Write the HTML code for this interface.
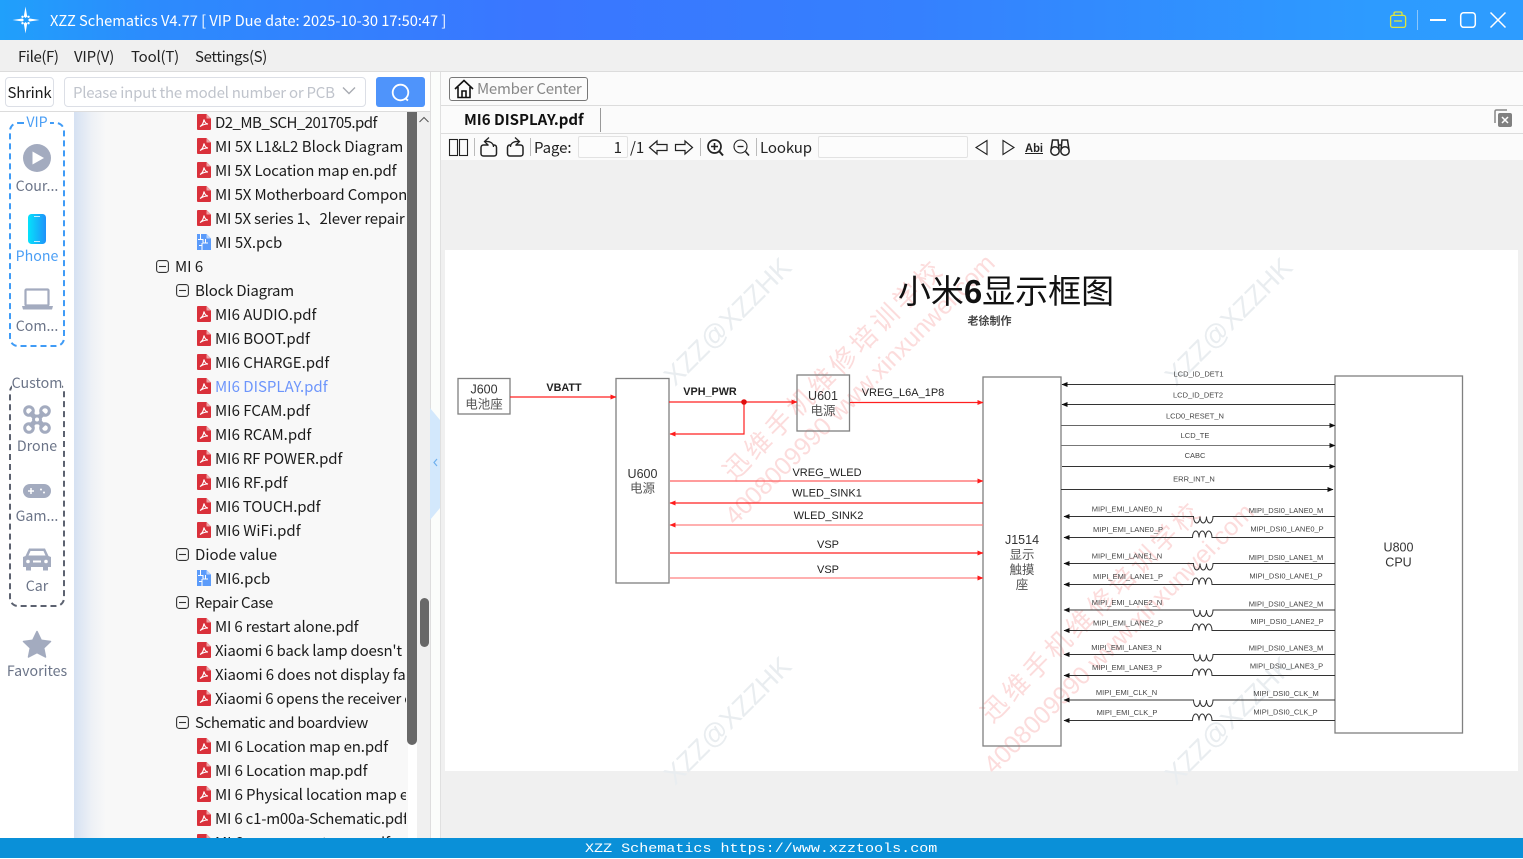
<!DOCTYPE html>
<html><head><meta charset="utf-8"><title>XZZ Schematics</title>
<style>
*{box-sizing:border-box}
html,body{margin:0;padding:0;width:1523px;height:858px;overflow:hidden;background:#fff;font-family:"Noto Sans CJK SC","Liberation Sans",sans-serif;font-size:15px;color:#222}
.a{position:absolute}
.t{position:absolute;white-space:nowrap;line-height:20px}
#tree{position:absolute;left:74px;top:112px;width:334px;height:726px;overflow:hidden;background:linear-gradient(90deg,#d5e1f2 0,#eef1f6 18px,#f8f8f8 32px)}
#tree div{height:24px;line-height:26px;white-space:nowrap;position:relative;margin:0;width:332px;overflow:hidden;color:#1c1c1c}
#tree .w{position:absolute;left:0;top:-2px;width:333px}
.f{padding-left:141px}.f svg{position:absolute;left:123px;top:4px;width:14px;height:16px}
.g{padding-left:121px}.g svg{position:absolute;left:102px;top:6px;width:13px;height:13px}
.h{padding-left:101px}.h svg{position:absolute;left:82px;top:6px;width:13px;height:13px}
.n1{letter-spacing:-.12px}.n2{letter-spacing:-.2px}.n3{letter-spacing:-.35px}.n5{letter-spacing:-.55px}
.s{position:absolute;left:0;width:74px;text-align:center;color:#6b7488;font-size:14.200px;line-height:20px;white-space:nowrap}
svg{display:block}
</style></head><body>
<svg width="0" height="0" style="position:absolute"><defs>
<symbol id="pdf" viewBox="0 0 14 16"><path d="M1 0H9.500L14 4.500V15a1 1 0 0 1-1 1H1a1 1 0 0 1-1-1V1a1 1 0 0 1 1-1z" fill="#d9303a"/><path d="M9.500 0V4.500H14z" fill="#f0a0a4"/><path d="M3 12.500C5 11.500 6.500 9 7 5.500C7.500 8 9 9.800 11 10C9 10 6 10.500 3 12.500z" fill="none" stroke="#fff" stroke-width="1.100"/></symbol>
<symbol id="pcb" viewBox="0 0 14 16"><path d="M0 0H9.500L14 4.500V16H0z" fill="#5b9bfa"/><path d="M9.500 0L14 4.500H9.500z" fill="#b9d4fd"/><path d="M3.500 0V5.500H1M3.500 5.500H6V9H11M8.500 9V5M5 16V11.500H2M5 11.500V9" fill="none" stroke="#fff" stroke-width="1"/></symbol>
<symbol id="min" viewBox="0 0 13 13"><rect x=".6" y=".6" width="11.800" height="11.800" rx="2.500" fill="none" stroke="#333" stroke-width="1.100"/><path d="M3 6.500H10" stroke="#333" stroke-width="1.100"/></symbol>
<marker id="ar" markerWidth="6" markerHeight="6" refX="5.500" refY="2.500" orient="auto" markerUnits="userSpaceOnUse"><path d="M0 0L6 2.500L0 5z" fill="#ff1c1c"/></marker>
<marker id="ab" markerWidth="6" markerHeight="6" refX="5.500" refY="2.500" orient="auto" markerUnits="userSpaceOnUse"><path d="M0 0L6 2.500L0 5z" fill="#111"/></marker>
</defs></svg>

<!-- Title bar -->
<div class="a" style="left:0;top:0;width:1523px;height:40px;background:linear-gradient(90deg,#20a0fb 0,#2c8bfd 10%,#3a76ff 35%,#3580fe 60%,#2d9bff 90%,#2d9cff 100%)"></div>
<svg class="a" style="left:11px;top:5px" width="30" height="30" viewBox="0 0 30 30"><path d="M14.500 1.500L16.200 11.500L14.500 13L12.800 11.500zM14.500 28.500L16.200 18.500L14.500 17L12.800 18.500zM1.500 15L11.500 13.500L13 15L11.500 16.500zM28.500 15L18.500 13.500L17 15L18.500 16.500z" fill="#fff"/><circle cx="11.500" cy="11.800" r="1.200" fill="#fff"/><circle cx="17.500" cy="11.800" r="1.200" fill="#fff"/><circle cx="11.500" cy="18.200" r="1.200" fill="#fff"/><circle cx="17.500" cy="18.200" r="1.200" fill="#fff"/></svg>
<div class="t" style="left:50px;top:11px;color:#fff;font-size:14.650px">XZZ Schematics V4.77 [ VIP Due date: 2025-10-30 17:50:47 ]</div>
<svg class="a" style="left:1385px;top:8px" width="125" height="26" viewBox="0 0 125 26"><path d="M9 7V5.500C9 4.500 9.500 4 10.500 4H15.500C16.500 4 17 4.500 17 5.500V7" fill="none" stroke="#dde63c" stroke-width="1.300"/><rect x="5.600" y="7.400" width="15" height="12" rx="2" fill="none" stroke="#dde63c" stroke-width="1.300"/><path d="M9 13H17" stroke="#dde63c" stroke-width="1.300"/><path d="M32.500 2V22" stroke="#8cc6fb" stroke-width="1"/><path d="M45 12H61" stroke="#fff" stroke-width="2"/><rect x="75.700" y="4.700" width="14.600" height="14.600" rx="3" fill="none" stroke="#fff" stroke-width="1.500"/><path d="M105.500 4.500L120.500 19.500M120.500 4.500L105.500 19.500" stroke="#fff" stroke-width="1.500"/></svg>

<!-- Menu -->
<div class="a" style="left:0;top:40px;width:1523px;height:32px;background:#f0f0f0;border-bottom:1px solid #dcdcdc"></div>
<div class="t" style="left:18px;top:47px;letter-spacing:-.4px">File(F)</div>
<div class="t" style="left:74px;top:47px;letter-spacing:-.2px">VIP(V)</div>
<div class="t" style="left:131px;top:47px;letter-spacing:-.2px">Tool(T)</div>
<div class="t" style="left:195px;top:47px;letter-spacing:-.36px">Settings(S)</div>

<!-- Search row -->
<div class="a" style="left:0;top:72px;width:430px;height:40px;background:#fff;border-bottom:1px solid #dcdcdc"></div>
<div class="a" style="left:5px;top:77px;width:49px;height:30px;border:1px solid #dcdfe6;border-radius:4px;text-align:center;line-height:30px;color:#1c1c1c;letter-spacing:-.25px">Shrink</div>
<div class="a" style="left:64px;top:77px;width:302px;height:30px;border:1px solid #dcdfe6;border-radius:4px;padding-left:8px;line-height:30px;color:#c0c4cc;white-space:nowrap;letter-spacing:-.24px">Please input the model number or PCB</div>
<svg class="a" style="left:342px;top:86px" width="14" height="10"><path d="M1 1.500L7 7.500L13 1.500" fill="none" stroke="#a8abb2" stroke-width="1.400"/></svg>
<div class="a" style="left:376px;top:77px;width:49px;height:30px;background:#4f94fb;border-radius:3px"></div>
<svg class="a" style="left:390px;top:82px" width="22" height="22"><circle cx="10.500" cy="10.500" r="7.800" fill="none" stroke="#fff" stroke-width="1.800"/><path d="M15.500 16.500L18 18.500" stroke="#fff" stroke-width="1.800"/></svg>

<!-- Left sidebar -->
<div class="a" style="left:0;top:112px;width:74px;height:726px;background:#fff"></div>
<div class="a" style="left:9px;top:122px;width:56px;height:225px;border:2px dashed #3f9bf6;border-radius:9px"></div>
<div class="s" style="top:112px;color:#4a9ef5"><span style="background:#fff;padding:0 2px">VIP</span></div>
<svg class="a" style="left:23px;top:144px" width="28" height="28"><circle cx="14" cy="14" r="14" fill="#a3abbf"/><path d="M9.500 7.500L21 14L9.500 20.500z" fill="#fff"/></svg>
<div class="s" style="top:175.500px">Cour...</div>
<svg class="a" style="left:28px;top:214px" width="18" height="31"><defs><linearGradient id="ph" x1="0" x2="1" y1="0" y2="0"><stop offset="0" stop-color="#05e2fb"/><stop offset="1" stop-color="#1f92fa"/></linearGradient></defs><rect width="18" height="30" rx="3.500" fill="url(#ph)"/><path d="M6 2.500H12M6 27.500H12" stroke="#fff" stroke-width=".8"/></svg>
<div class="s" style="top:245.500px;color:#4a9ef5">Phone</div>
<svg class="a" style="left:22px;top:288px" width="31" height="22"><rect x="3.500" y="1.500" width="23" height="16" rx="1" fill="none" stroke="#a3abbf" stroke-width="2.200"/><path d="M0 18H31L30 21.500H1z" fill="#a3abbf"/></svg>
<div class="s" style="top:315.500px">Com...</div>

<div class="a" style="left:9px;top:383px;width:56px;height:224px;border:2px dashed #5c6270;border-radius:9px"></div>
<div class="s" style="top:373px"><span style="background:#fff">Custom</span></div>
<svg class="a" style="left:23px;top:405px" width="28" height="29" viewBox="0 0 28 29"><g fill="none" stroke="#a3abbf"><circle cx="6" cy="6" r="4.300" stroke-width="3"/><circle cx="22" cy="6" r="4.300" stroke-width="3"/><circle cx="6" cy="23" r="4.300" stroke-width="3"/><circle cx="22" cy="23" r="4.300" stroke-width="3"/><path d="M7 7.500L21 21.500M21 7.500L7 21.500" stroke-width="5"/></g><circle cx="14" cy="14.500" r="5" fill="#a3abbf"/><circle cx="14" cy="14.500" r="2" fill="#fff"/></svg>
<div class="s" style="top:435.500px">Drone</div>
<svg class="a" style="left:23px;top:484px" width="28" height="14"><rect width="28" height="14" rx="7" fill="#a3abbf"/><path d="M5 7H11M8 4V10" stroke="#fff" stroke-width="1.500"/><circle cx="18" cy="5.500" r="1" fill="#fff"/><circle cx="21" cy="8.500" r="1" fill="#fff"/></svg>
<div class="s" style="top:505.500px">Gam...</div>
<svg class="a" style="left:23px;top:547px" width="28" height="24" viewBox="0 0 28 24"><path d="M6 1.500H22L25.500 9L28 10V20H25V23.500H20V20H8V23.500H3V20H0V10L2.500 9z" fill="#a3abbf"/><path d="M7.500 4H20.500L22.500 8.500H5.500z" fill="#fff"/><circle cx="5" cy="14.500" r="1.800" fill="#fff"/><circle cx="23" cy="14.500" r="1.800" fill="#fff"/><path d="M10 14.500H18" stroke="#fff" stroke-width="2"/></svg>
<div class="s" style="top:575.500px">Car</div>
<svg class="a" style="left:22px;top:630px" width="30" height="29" viewBox="0 0 30 29"><path d="M15 1.500L19.200 10.200L28.500 11.500L21.700 18L23.500 27L15 22.600L6.500 27L8.300 18L1.500 11.500L10.800 10.200z" fill="#a3abbf" stroke="#a3abbf" stroke-width="1.500" stroke-linejoin="round"/></svg>
<div class="s" style="top:660.500px">Favorites</div>

<!-- Tree -->
<div id="tree"><div class="w" style="height:auto;overflow:visible">
<div class="f n5"><svg><use href="#pdf"/></svg>D2_MB_SCH_201705.pdf</div>
<div class="f"><svg><use href="#pdf"/></svg>MI 5X L1&amp;L2 Block Diagram</div>
<div class="f n1"><svg><use href="#pdf"/></svg>MI 5X Location map en.pdf</div>
<div class="f n1"><svg><use href="#pdf"/></svg>MI 5X Motherboard Components.pdf</div>
<div class="f n2"><svg><use href="#pdf"/></svg>MI 5X series 1、2lever repair</div>
<div class="f"><svg><use href="#pcb"/></svg>MI 5X.pcb</div>
<div class="h"><svg><use href="#min"/></svg>MI 6</div>
<div class="g n2"><svg><use href="#min"/></svg>Block Diagram</div>
<div class="f"><svg><use href="#pdf"/></svg>MI6 AUDIO.pdf</div>
<div class="f"><svg><use href="#pdf"/></svg>MI6 BOOT.pdf</div>
<div class="f"><svg><use href="#pdf"/></svg>MI6 CHARGE.pdf</div>
<div class="f" style="color:#6d95fb"><svg><use href="#pdf"/></svg>MI6 DISPLAY.pdf</div>
<div class="f"><svg><use href="#pdf"/></svg>MI6 FCAM.pdf</div>
<div class="f"><svg><use href="#pdf"/></svg>MI6 RCAM.pdf</div>
<div class="f n1"><svg><use href="#pdf"/></svg>MI6 RF POWER.pdf</div>
<div class="f"><svg><use href="#pdf"/></svg>MI6 RF.pdf</div>
<div class="f n1"><svg><use href="#pdf"/></svg>MI6 TOUCH.pdf</div>
<div class="f"><svg><use href="#pdf"/></svg>MI6 WiFi.pdf</div>
<div class="g"><svg><use href="#min"/></svg>Diode value</div>
<div class="f"><svg><use href="#pcb"/></svg>MI6.pcb</div>
<div class="g n3"><svg><use href="#min"/></svg>Repair Case</div>
<div class="f n2"><svg><use href="#pdf"/></svg>MI 6 restart alone.pdf</div>
<div class="f n2"><svg><use href="#pdf"/></svg>Xiaomi 6 back lamp doesn't</div>
<div class="f n1"><svg><use href="#pdf"/></svg>Xiaomi 6 does not display fault.pdf</div>
<div class="f n2"><svg><use href="#pdf"/></svg>Xiaomi 6 opens the receiver one.pdf</div>
<div class="g n3"><svg><use href="#min"/></svg>Schematic and boardview</div>
<div class="f n1"><svg><use href="#pdf"/></svg>MI 6 Location map en.pdf</div>
<div class="f n1"><svg><use href="#pdf"/></svg>MI 6 Location map.pdf</div>
<div class="f n1"><svg><use href="#pdf"/></svg>MI 6 Physical location map en.pdf</div>
<div class="f n2"><svg><use href="#pdf"/></svg>MI 6 c1-m00a-Schematic.pdf</div>
<div class="f"><svg><use href="#pdf"/></svg>MI 6 component map.pdf</div>
</div></div>

<!-- scrollbars -->
<div class="a" style="left:407px;top:112px;width:10px;height:633px;background:#686868;border-radius:0 0 5px 5px"></div>
<div class="a" style="left:417px;top:112px;width:13px;height:726px;background:#f0f0f0"></div>
<svg class="a" style="left:418px;top:115px" width="12" height="10"><path d="M1.500 7L6 2.500L10.500 7" fill="none" stroke="#555" stroke-width="1"/></svg>
<div class="a" style="left:420px;top:598px;width:9px;height:49px;background:#686868;border-radius:5px"></div>
<div class="a" style="left:430px;top:72px;width:1px;height:766px;background:#dedede"></div>
<div class="a" style="left:431px;top:72px;width:10px;height:766px;background:#fbfdfb"></div>
<div class="a" style="left:440px;top:72px;width:1px;height:766px;background:#e0e0e0"></div>
<svg class="a" style="left:430px;top:408px" width="11" height="113"><path d="M0 0L10 12V100L0 112z" fill="#d3e8fc"/><path d="M7 51L4 54.500L7 58" fill="none" stroke="#6fb0ee" stroke-width="1.200"/></svg>

<!-- Right panel -->
<div class="a" style="left:441px;top:72px;width:1082px;height:34px;background:#fbfbfb;border-bottom:1px solid #dcdcdc"></div>
<div class="a" style="left:449px;top:77px;width:139px;height:24px;border:1px solid #777;border-radius:3px"></div>
<svg class="a" style="left:454px;top:79px" width="20" height="20" viewBox="0 0 20 20"><path d="M1 10L10 1.500L19 10M4 8V18.500H16V8M8 18.500V12H12V18.500" fill="none" stroke="#111" stroke-width="1.600"/></svg>
<div class="t" style="left:477px;top:79px;color:#888;letter-spacing:-.25px">Member Center</div>
<div class="a" style="left:441px;top:106px;width:1082px;height:28px;background:#fbfbfb;border-bottom:1px solid #dcdcdc"></div>
<div class="t" style="left:464px;top:110px;font-weight:700;color:#111">MI6 DISPLAY.pdf</div>
<div class="a" style="left:600px;top:108px;width:1px;height:24px;background:#999"></div>
<svg class="a" style="left:1494px;top:109px" width="19" height="20"><path d="M1 14V2.500C1 1.500 1.500 1 2.500 1H13" fill="none" stroke="#888" stroke-width="1.500"/><rect x="4" y="4" width="14" height="14" rx="2" fill="#808080"/><path d="M8 8L14 14M14 8L8 14" stroke="#fff" stroke-width="1.500"/></svg>

<div class="a" style="left:441px;top:134px;width:1082px;height:26px;background:#fbfbfb"></div>
<svg class="a" style="left:441px;top:134px" width="640" height="26" viewBox="441 134 640 26">
<g fill="none" stroke="#222" stroke-width="1.100">
<rect x="449.500" y="139.500" width="8" height="16"/><rect x="459.500" y="139.500" width="8" height="16"/>
<path d="M488 145H483.500C482 145 481 146 481 147.500V153.500C481 155 482 156 483.500 156H494C495.500 156 496.500 155 496.500 153.500V147.500C496.500 146 495.500 145 494 145H493" stroke-width="1.500"/>
<path d="M493.500 147C493.500 143 490 141 485 141.500" stroke-width="1.300"/><path d="M489 137.500L484.500 141.500L488.500 145.500" stroke-width="1.300"/>
<path d="M516 145H520.500C522 145 523 146 523 147.500V153.500C523 155 522 156 520.500 156H510C508.500 156 507.500 155 507.500 153.500V147.500C507.500 146 508.500 145 510 145H511" stroke-width="1.500"/>
<path d="M510.500 147C510.500 143 514 141 519 141.500" stroke-width="1.300"/><path d="M515 137.500L519.500 141.500L515.500 145.500" stroke-width="1.300"/>
<path d="M649.500 147.500L657 141V144.500H667V150.500H657V154z" stroke-width="1.200"/>
<path d="M692.500 147.500L685 141V144.500H675.500V150.500H685V154z" stroke-width="1.200"/>
<circle cx="714.500" cy="146.500" r="6.500" stroke-width="1.700"/><path d="M719.500 151.500L723 155.500" stroke-width="2"/><path d="M711 146.500H718M714.500 143V150" stroke-width="1.600"/>
<circle cx="740.500" cy="146.500" r="6.500" stroke-width="1.100"/><path d="M745.500 151.500L749 155.500" stroke-width="1.600"/><path d="M737.500 146.500H743.500" stroke-width="1.300"/>
<path d="M987 140.500L976 147.500L987 154.500z"/><path d="M1003 140.500L1014 147.500L1003 154.500z"/>
<path d="M1025 153.500H1043" stroke-width="1"/>
<circle cx="1055" cy="151" r="4.200" stroke-width="1.500"/><circle cx="1065" cy="151" r="4.200" stroke-width="1.500"/><path d="M1051 150L1052.500 140H1058L1059 150M1061 150L1062 140H1067.500L1069 150M1059 145H1061" stroke-width="1.500"/>
</g>
<g stroke="#bbb"><path d="M474.500 138V156M530.500 138V156M700.500 138V156M756.500 138V156"/></g>
<text x="1034" y="152" font-family="Liberation Sans" font-size="11.500" font-weight="700" text-anchor="middle" fill="#222" textLength="18" lengthAdjust="spacingAndGlyphs">Abi</text>
</svg>
<div class="t" style="left:534px;top:138px;letter-spacing:-.1px">Page:</div>
<div class="a" style="left:578px;top:136px;width:50px;height:22px;border:1px solid #e2e2e2;background:#fcfcfc;text-align:right;padding-right:5px;line-height:21px;border-radius:2px">1</div>
<div class="t" style="left:630px;top:138px">/1</div>
<div class="t" style="left:760px;top:138px;letter-spacing:-.1px">Lookup</div>
<div class="a" style="left:818px;top:136px;width:150px;height:22px;border:1px solid #e2e2e2;background:#fcfcfc;border-radius:2px"></div>

<!-- Canvas -->
<div class="a" style="left:441px;top:160px;width:1082px;height:678px;background:#f0f0f0"></div>
<div class="a" style="left:445px;top:250px;width:1073px;height:521px;background:#fff"></div>
<svg class="a" style="left:441px;top:160px" width="1082" height="678" viewBox="441 160 1082 678" font-family="Liberation Sans" text-anchor="middle">
<!-- watermarks -->
<g font-size="27" fill="#e9edf0" text-anchor="middle">
<text transform="translate(734 328) rotate(-45)">XZZ@XZZHK</text>
<text transform="translate(734 727) rotate(-45)">XZZ@XZZHK</text>
<text transform="translate(1235 328) rotate(-45)">XZZ@XZZHK</text>
<text transform="translate(1235 727) rotate(-45)">XZZ@XZZHK</text>
</g>
<g fill="#fcdcdc" text-anchor="start">
<g font-family="Noto Sans CJK SC" font-size="26" letter-spacing="4">
<text transform="translate(734 482) rotate(-45)">迅维手机维修培训学校</text>
<text transform="translate(992 724) rotate(-45)">迅维手机维修培训学校</text>
</g>
<g font-size="25">
<text transform="translate(735 526) rotate(-45)">4008009990 www.xinxunwei.com</text>
<text transform="translate(994 775) rotate(-45)">4008009990 www.xinxunwei.com</text>
</g>
</g>
<!-- boxes -->
<g fill="none" stroke="#808080" stroke-width="1.300">
<rect x="458" y="378.500" width="52" height="35.500"/>
<rect x="616" y="378.500" width="53" height="204.500"/>
<rect x="797" y="375" width="52.500" height="56"/>
<rect x="983" y="377" width="78" height="369"/>
<rect x="1335" y="376" width="127.500" height="357"/>
</g>
<!-- red nets -->
<g fill="none" stroke="#ff2020" stroke-width="1.200">
<path d="M510 397H616" marker-end="url(#ar)"/>
<path d="M669 402H797" marker-end="url(#ar)"/>
<path d="M744 402V434H670" marker-end="url(#ar)"/>
<path d="M850 402.500H983" marker-end="url(#ar)"/>
<path d="M670 481H983" marker-end="url(#ar)" stroke="#ff6060"/>
<path d="M983 503H670" marker-end="url(#ar)"/>
<path d="M983 525H670" marker-end="url(#ar)" stroke="#ff8080"/>
<path d="M670 553H983" marker-end="url(#ar)"/>
<path d="M670 578H983" marker-end="url(#ar)" stroke="#ff8080"/>
</g>
<circle cx="744" cy="402" r="2.800" fill="#e01010"/>
<!-- black nets -->
<g fill="none" stroke="#333" stroke-width="1">
<path d="M1335 384.500H1062" marker-end="url(#ab)"/>
<path d="M1335 404.500H1062" marker-end="url(#ab)"/>
<path d="M1061 425.500H1335" marker-end="url(#ab)" stroke="#666"/>
<path d="M1061 445.500H1335" marker-end="url(#ab)" stroke="#777"/>
<path d="M1062 466.500H1335" marker-end="url(#ab)"/>
<path d="M1061 489.500H1333" marker-end="url(#ab)"/>
<path d="M1335 516.500H1213a3.250 6.500 0 0 1-6.500 0a3.250 6.500 0 0 1-6.500 0a3.250 6.500 0 0 1-6.500 0H1064" marker-end="url(#ab)"/>
<path d="M1335 537.500H1212a3.250 6.500 0 0 0-6.500 0a3.250 6.500 0 0 0-6.500 0a3.250 6.500 0 0 0-6.500 0H1064" marker-end="url(#ab)"/>
<path d="M1335 563.500H1213a3.250 6.500 0 0 1-6.500 0a3.250 6.500 0 0 1-6.500 0a3.250 6.500 0 0 1-6.500 0H1064" marker-end="url(#ab)"/>
<path d="M1335 584.500H1212a3.250 6.500 0 0 0-6.500 0a3.250 6.500 0 0 0-6.500 0a3.250 6.500 0 0 0-6.500 0H1064" marker-end="url(#ab)"/>
<path d="M1335 610H1213a3.250 6.500 0 0 1-6.500 0a3.250 6.500 0 0 1-6.500 0a3.250 6.500 0 0 1-6.500 0H1064" marker-end="url(#ab)"/>
<path d="M1335 630.500H1212a3.250 6.500 0 0 0-6.500 0a3.250 6.500 0 0 0-6.500 0a3.250 6.500 0 0 0-6.500 0H1064" marker-end="url(#ab)"/>
<path d="M1335 654.500H1213a3.250 6.500 0 0 1-6.500 0a3.250 6.500 0 0 1-6.500 0a3.250 6.500 0 0 1-6.500 0H1064" marker-end="url(#ab)"/>
<path d="M1335 675.500H1212a3.250 6.500 0 0 0-6.500 0a3.250 6.500 0 0 0-6.500 0a3.250 6.500 0 0 0-6.500 0H1064" marker-end="url(#ab)"/>
<path d="M1335 700H1213a3.250 6.500 0 0 1-6.500 0a3.250 6.500 0 0 1-6.500 0a3.250 6.500 0 0 1-6.500 0H1064" marker-end="url(#ab)"/>
<path d="M1335 720.500H1212a3.250 6.500 0 0 0-6.500 0a3.250 6.500 0 0 0-6.500 0a3.250 6.500 0 0 0-6.500 0H1064" marker-end="url(#ab)"/>
</g>
<!-- Title -->
<g fill="#111">
<text x="1006" y="303" font-size="33" font-family="Liberation Sans,Noto Sans CJK SC"><tspan font-family="Noto Sans CJK SC" font-weight="400">小米</tspan><tspan font-weight="700">6</tspan><tspan font-family="Noto Sans CJK SC" font-weight="400">显示框图</tspan></text>
</g>
<text x="989.500" y="324.500" font-size="11" font-weight="700" fill="#444" font-family="Noto Sans CJK SC">老徐制作</text>
<!-- box labels -->
<g fill="#333" font-size="12.500" font-family="Liberation Sans,Noto Sans CJK SC">
<text x="484" y="393.500">J600</text><text x="484" y="408.500" fill="#555">电池座</text>
<text x="642.500" y="478">U600</text><text x="642.500" y="492.500" fill="#555">电源</text>
<text x="823" y="400">U601</text><text x="823" y="415" fill="#555">电源</text>
<text x="1022" y="544">J1514</text><text x="1022" y="559" fill="#555">显示</text><text x="1022" y="574" fill="#555">触摸</text><text x="1022" y="589" fill="#555">座</text>
<text x="1398.500" y="551.500">U800</text><text x="1398.500" y="566.500">CPU</text>
</g>
<g fill="#222" font-size="11">
<text x="564" y="391" font-weight="700" font-size="10.800">VBATT</text>
<text x="710" y="395" font-weight="700" font-size="10.800">VPH_PWR</text>
<text x="903" y="396">VREG_L6A_1P8</text>
<text x="827" y="476">VREG_WLED</text>
<text x="827" y="496.500">WLED_SINK1</text>
<text x="828.500" y="519">WLED_SINK2</text>
<text x="828" y="548">VSP</text>
<text x="828" y="573">VSP</text>
</g>
<g fill="#444" font-size="7.500">
<text x="1198.500" y="376.500">LCD_ID_DET1</text>
<text x="1198" y="397.500">LCD_ID_DET2</text>
<text x="1195" y="418.500">LCD0_RESET_N</text>
<text x="1195" y="438">LCD_TE</text>
<text x="1195" y="458">CABC</text>
<text x="1194" y="481.500">ERR_INT_N</text>
<text x="1127" y="511.500">MIPI_EMI_LANE0_N</text><text x="1286" y="513">MIPI_DSI0_LANE0_M</text>
<text x="1128" y="532">MIPI_EMI_LANE0_P</text><text x="1287" y="531.500">MIPI_DSI0_LANE0_P</text>
<text x="1127" y="558.500">MIPI_EMI_LANE1_N</text><text x="1286" y="560">MIPI_DSI0_LANE1_M</text>
<text x="1128" y="579">MIPI_EMI_LANE1_P</text><text x="1286" y="578.500">MIPI_DSI0_LANE1_P</text>
<text x="1127" y="605">MIPI_EMI_LANE2_N</text><text x="1286" y="606.500">MIPI_DSI0_LANE2_M</text>
<text x="1128" y="625.500">MIPI_EMI_LANE2_P</text><text x="1287" y="624">MIPI_DSI0_LANE2_P</text>
<text x="1126.500" y="650">MIPI_EMI_LANE3_N</text><text x="1286" y="650.500">MIPI_DSI0_LANE3_M</text>
<text x="1127" y="670">MIPI_EMI_LANE3_P</text><text x="1286.500" y="668.500">MIPI_DSI0_LANE3_P</text>
<text x="1126.500" y="695">MIPI_EMI_CLK_N</text><text x="1286" y="696">MIPI_DSI0_CLK_M</text>
<text x="1127" y="715">MIPI_EMI_CLK_P</text><text x="1285.500" y="714.500">MIPI_DSI0_CLK_P</text>
</g>
</svg>

<!-- Footer -->
<div class="a" style="left:0;top:838px;width:1523px;height:20px;background:#0a90d8"></div>
<div class="a" style="left:585px;top:839px;height:20px;line-height:20px;color:#fff;font-family:'Liberation Mono',monospace;font-size:13px;white-space:nowrap;transform:scaleX(1.158);transform-origin:0 0">XZZ Schematics https://www.xzztools.com</div>
</body></html>
